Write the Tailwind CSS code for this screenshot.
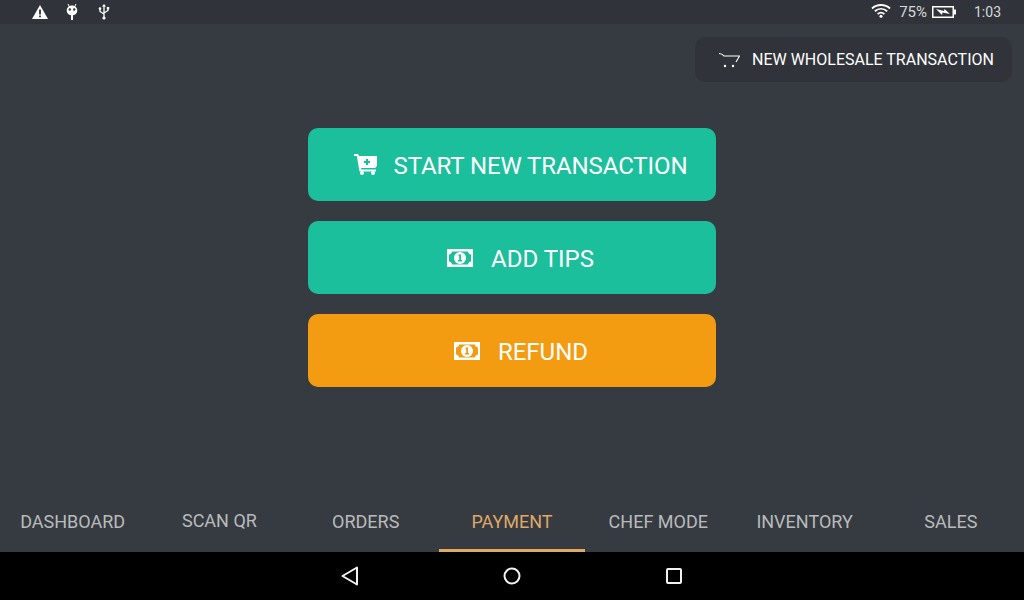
<!DOCTYPE html>
<html lang="en">
  <head>
    <meta charset="UTF-8" />
    <meta name="viewport" content="width=device-width, initial-scale=1.0" />
    <title>Payment</title>
    <script src="https://cdn.jsdelivr.net/npm/@tailwindcss/browser@4"></script>
  </head>
  <body class="w-[1024px] h-[600px] overflow-hidden bg-[#363a41] font-['Roboto',sans-serif] flex flex-col">
    <!-- status bar -->
    <div class="h-6 bg-[#30343a] flex items-center justify-between text-white shrink-0">
      <div class="flex items-center">
        <svg class="ml-[32px]" width="16" height="14" viewBox="0 0 16 14"><path fill="#fff" d="M8 0 16 14H0Z"/><rect x="7.100" y="4.500" width="1.800" height="5" fill="#30343a"/><rect x="7.100" y="10.500" width="1.800" height="1.800" fill="#30343a"/></svg>
        <svg class="ml-[18px]" width="12" height="16" viewBox="0 0 12 16"><path fill="none" stroke="#fff" stroke-width="1" d="M2 0 3.500 3M10 0 8.500 3"/><path fill="#fff" d="M6 1.500C9 1.500 11.300 3.800 11.300 6.500 11.300 9 9.500 10.800 7 11.200V16H5V11.200C2.500 10.800.7 9 .7 6.500.7 3.800 3 1.500 6 1.500Z"/><circle cx="3.800" cy="5.500" r="1.200" fill="#30343a"/><circle cx="8.200" cy="5.500" r="1.200" fill="#30343a"/></svg>
        <svg class="ml-[20px]" width="12" height="16" viewBox="0 0 12 16"><path fill="none" stroke="#fff" stroke-width="1.300" d="M6 2V14M2 5V7.500L6 10M10 4.500V6.500L6 9"/><path fill="#fff" d="M6 0 8 2.500H4Z"/><circle cx="6" cy="14" r="1.600" fill="#fff"/><circle cx="2" cy="4.500" r="1.300" fill="#fff"/><rect x="8.800" y="3" width="2.400" height="2.400" fill="#fff"/></svg>
      </div>
      <div class="flex items-center text-[14px] text-[#d8d9db]">
        <svg class="mt-[-3px] mr-[1px]" width="20" height="15" viewBox="0 0 20 15"><path fill="none" stroke="#fff" stroke-width="1.800" d="M1 5.500C6 .8 14 .8 19 5.500M3.800 8.200C7.500 5 12.500 5 16.200 8.200M6.600 11C8.600 9.400 11.400 9.400 13.400 11"/><circle cx="10" cy="13.300" r="1.500" fill="#fff"/></svg>
        <span class="ml-[7px] text-[15px]">75%</span>
        <svg class="ml-[5px]" width="24" height="12" viewBox="0 0 24 12"><rect x=".75" y=".75" width="20.500" height="10.500" fill="none" stroke="#fff" stroke-width="1.500"/><rect x="21" y="3.500" width="3" height="5" fill="#fff"/><path fill="#fff" d="M4 3 12 5 12.500 3 18 8 10.500 6.500 10 9 6 5Z"/></svg>
        <span class="ml-[18px] mr-[23px]">1:03</span>
      </div>
    </div>

    <!-- main -->
    <div class="flex-1 flex flex-col">
      <div class="flex justify-end pt-[13px] pr-[12px]">
        <button class="w-[317px] h-[45px] bg-[#30343a] rounded-[10px] flex items-center text-white text-[16px]">
          <svg class="ml-[23px]" width="22" height="16" viewBox="0 0 22 16"><path fill="none" stroke="#fff" stroke-width="1.100" d="M1 1.500C3 1.500 4.500 2 6 4H21.500L18 10"/><circle cx="7" cy="14" r="1.200" fill="#fff"/><circle cx="15" cy="14" r="1.200" fill="#fff"/></svg>
          <span class="ml-[12px]">NEW WHOLESALE TRANSACTION</span>
        </button>
      </div>

      <div class="flex flex-col items-center gap-5 mt-[46px]">
        <button class="w-[408px] h-[73px] rounded-[10px] bg-[#1cbf9c] text-white text-[24px] flex items-center justify-center pl-[17px]">
          <svg width="24" height="21" viewBox="0 0 24 21"><path fill="#fff" fill-rule="evenodd" d="M0 0H4L5 2H23V12L21 14H7L7.500 15.500H22V17.500H5.500L2.800 2H0ZM12 5V7H10V9H12V11H14V9H16V7H14V5Z"/><circle cx="8" cy="19" r="2" fill="#fff"/><circle cx="19" cy="19" r="2" fill="#fff"/></svg>
          <span class="ml-[16px] pt-[2px] tracking-[-0.1px]">START NEW TRANSACTION</span>
        </button>
        <button class="w-[408px] h-[73px] rounded-[10px] bg-[#1cbf9c] text-white text-[24px] flex items-center justify-center pl-[17px]">
          <svg width="26" height="18" viewBox="0 0 26 18"><path fill="#fff" fill-rule="evenodd" d="M0 0H26V18H0ZM5 2.500C5 4 3.500 5.500 2 5.500V12.500C3.500 12.500 5 14 5 15.500H21C21 14 22.500 12.500 24 12.500V5.500C22.500 5.500 21 4 21 2.500Z"/><circle cx="13" cy="9" r="6" fill="#fff"/><path fill="#1cbf9c" d="M11.500 5.500H14V11H15V12.500H11V11H12.200V7.200H11.500Z"/></svg>
          <span class="ml-[18px] pt-[2px]">ADD TIPS</span>
        </button>
        <button class="w-[408px] h-[73px] rounded-[10px] bg-[#f39c12] text-white text-[24px] flex items-center justify-center pl-[18px]">
          <svg width="26" height="18" viewBox="0 0 26 18"><path fill="#fff" fill-rule="evenodd" d="M0 0H26V18H0ZM5 2.500C5 4 3.500 5.500 2 5.500V12.500C3.500 12.500 5 14 5 15.500H21C21 14 22.500 12.500 24 12.500V5.500C22.500 5.500 21 4 21 2.500Z"/><circle cx="13" cy="9" r="6" fill="#fff"/><path fill="#f39c12" d="M11.500 5.500H14V11H15V12.500H11V11H12.200V7.200H11.500Z"/></svg>
          <span class="ml-[18px] pt-[2px]">REFUND</span>
        </button>
      </div>

      <!-- tabs -->
      <nav class="mt-auto grid grid-cols-7 text-[18px] text-[#b9babc]">
        <a class="h-[50px] flex items-center justify-center pb-[12px] pr-[1px]">DASHBOARD</a>
        <a class="h-[50px] flex items-center justify-center pb-[14px]">SCAN QR</a>
        <a class="h-[50px] flex items-center justify-center pb-[12px]">ORDERS</a>
        <a class="h-[50px] flex items-center justify-center pb-[9px] text-[#dfa966] border-b-[3px] border-[#dfa966]">PAYMENT</a>
        <a class="h-[50px] flex items-center justify-center pb-[12px]">CHEF MODE</a>
        <a class="h-[50px] flex items-center justify-center pb-[12px]">INVENTORY</a>
        <a class="h-[50px] flex items-center justify-center pb-[12px]">SALES</a>
      </nav>
    </div>

    <!-- android nav -->
    <div class="h-12 bg-black shrink-0 flex items-center justify-center gap-[144px] pr-[1px]">
      <svg width="18" height="20" viewBox="0 0 18 20"><path fill="none" stroke="#f2f2f2" stroke-width="2" stroke-linejoin="round" d="M16 1.500V18.500L1.500 10Z"/></svg>
      <svg width="18" height="18" viewBox="0 0 18 18"><circle cx="9" cy="9" r="7.500" fill="none" stroke="#f2f2f2" stroke-width="2"/></svg>
      <svg class="ml-[1px]" width="16" height="16" viewBox="0 0 16 16"><rect x="1" y="1" width="14" height="14" rx="1" fill="none" stroke="#f2f2f2" stroke-width="2"/></svg>
    </div>
  </body>
</html>
